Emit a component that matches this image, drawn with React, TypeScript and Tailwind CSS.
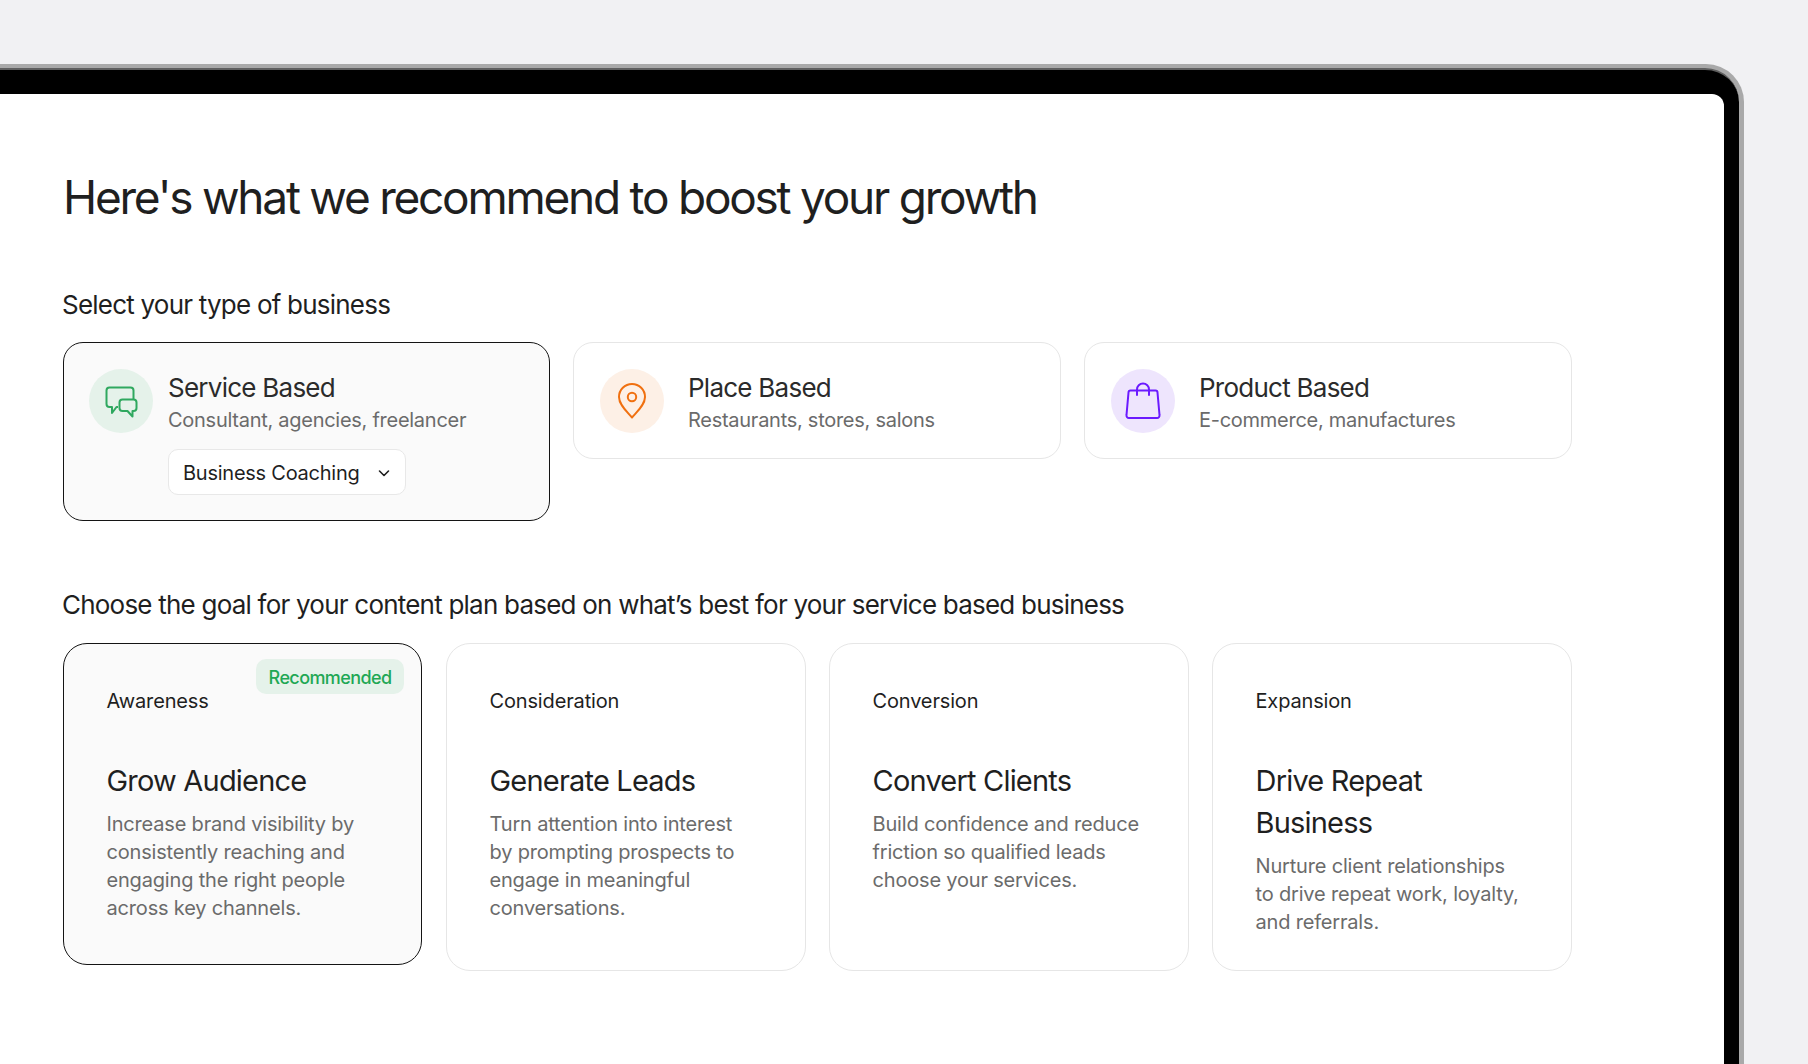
const font = "font-['Inter','Liberation_Sans',sans-serif]";

function ChatIcon() {
  return (
    <svg width="64" height="64" viewBox="0 0 64 64" fill="none" stroke="#2fa85f" strokeWidth="2" strokeLinejoin="round">
      <path d="M29 38H27.5L23 44V38H20.5a3 3 0 0 1-3-3V21.5a3 3 0 0 1 3-3H41.5a3 3 0 0 1 3 3V30" />
      <path d="M33.5 30.5H44.5a3 3 0 0 1 3 3V39a3 3 0 0 1-3 3H43.5V47.5L38.5 42H33.5a3 3 0 0 1-3-3V33.5a3 3 0 0 1 3-3Z" />
    </svg>
  );
}

function PinIcon() {
  return (
    <svg width="64" height="64" viewBox="0 0 64 64" fill="none" stroke="#f07010" strokeWidth="2" strokeLinejoin="round">
      <path d="M32 48.5C27 42.5 19 36 19 28a13 13 0 0 1 26 0C45 36 37 42.5 32 48.5Z" />
      <circle cx="32" cy="28" r="4.2" />
    </svg>
  );
}

function BagIcon() {
  return (
    <svg width="64" height="64" viewBox="0 0 64 64" fill="none" stroke="#6b1aff" strokeWidth="2" strokeLinejoin="round" strokeLinecap="round">
      <path d="M19.5 21.5H44.5a2 2 0 0 1 2 2L48.5 46a2.5 2.5 0 0 1-2.5 3H18a2.5 2.5 0 0 1-2.5-3L17.5 23.5a2 2 0 0 1 2-2Z" />
      <path d="M26 26V20.5a6 6 0 0 1 12 0V26" />
    </svg>
  );
}

function BusinessCard(props: {
  title: string;
  desc: string;
  circle: string;
  icon: React.ReactNode;
  selected?: boolean;
}) {
  return (
    <div
      className={
        props.selected
          ? "flex h-[179px] items-start gap-[15px] rounded-[20px] border-[1.5px] border-[#141414] bg-[#fafafa] pl-[25px] pt-[26px]"
          : "flex h-[117px] items-start gap-[24px] rounded-[20px] border-[1.5px] border-[#e6e6e6] bg-white pl-[26px] pt-[26px]"
      }
    >
      <div className={"flex h-16 w-16 shrink-0 items-center justify-center rounded-full " + props.circle}>
        {props.icon}
      </div>
      <div className="flex flex-col pt-[2px]">
        <div className="text-[26px] leading-[34px] tracking-[-0.75px] text-[#2b2b2b]">{props.title}</div>
        <div className="text-[20px] leading-[30px] tracking-[-0.27px] text-[#6b6b6b]">{props.desc}</div>
        {props.selected && (
          <div className="mt-[14px] flex h-[46px] w-[238px] items-center justify-between rounded-[10px] border border-[#e8e8e8] bg-white pl-[14px] pr-[13px] pt-px">
            <span className="text-[20px] tracking-[-0.25px] text-[#1f1f1f]">Business Coaching</span>
            <svg width="16" height="16" viewBox="0 0 16 16" fill="none" stroke="#1f1f1f" strokeWidth="1.6" strokeLinecap="round" strokeLinejoin="round">
              <path d="M3.5 6L8 10.5L12.5 6" />
            </svg>
          </div>
        )}
      </div>
    </div>
  );
}

function GoalCard(props: {
  stage: string;
  title: string[];
  desc: string[];
  selected?: boolean;
}) {
  return (
    <div
      className={
        props.selected
          ? "relative mr-px h-[322px] self-start rounded-[24px] border-[1.5px] border-[#141414] bg-[#fafafa] pl-[42.5px] pt-[44px]"
          : "relative rounded-[24px] border-[1.5px] border-[#e6e6e6] bg-white pl-[42.5px] pt-[44px]"
      }
    >
      {props.selected && (
        <div className="absolute right-[17px] top-[15px] flex h-[35px] w-[148px] items-center justify-center rounded-[10px] bg-[#e5f2ea] pt-[2px] text-[18px] font-medium tracking-[-0.6px] text-[#1fa855]">
          Recommended
        </div>
      )}
      <div className="text-[20px] leading-[26px] tracking-[-0.15px] text-[#1f1f1f]">{props.stage}</div>
      <div className="mt-[46px] text-[29px] leading-[42px] tracking-[-0.8px] text-[#1f1f1f]">
        {props.title.map((t) => (
          <div key={t}>{t}</div>
        ))}
      </div>
      <div className="mt-[8px] pb-[34px] text-[20px] leading-[28px] tracking-[-0.18px] text-[#6b6b6b]">
        {props.desc.map((t) => (
          <div key={t}>{t}</div>
        ))}
      </div>
    </div>
  );
}

export default function App() {
  return (
    <div className={"h-[1064px] w-[1808px] overflow-hidden bg-[#f1f1f3] pr-[64px] pt-[64px] " + font}>
      <div className="h-full rounded-tr-[38px] bg-[#a9a9a9] pr-[5px] pt-[4px]">
        <div className="h-full rounded-tr-[34px] border-t-2 border-[#5f5f5f] bg-black pr-[15px] pt-[24px]">
          <div className="h-full rounded-tr-[12px] bg-white pl-[63px] pt-[74px]">
            <h1 className="text-[46px] leading-[58px] tracking-[-2.25px] text-[#1f1f1f]">
              Here's what we recommend to boost your growth
            </h1>

            <div className="-ml-px mt-[63px] text-[26px] leading-[32px] tracking-[-0.78px] text-[#1f1f1f]">
              Select your type of business
            </div>
            <div className="mt-[21px] grid w-[1509px] grid-cols-[487px_488px_488px] items-start gap-[23px]">
              <BusinessCard
                selected
                title="Service Based"
                desc="Consultant, agencies, freelancer"
                circle="bg-[#e5f2ea]"
                icon={<ChatIcon />}
              />
              <BusinessCard
                title="Place Based"
                desc="Restaurants, stores, salons"
                circle="bg-[#fdf0e6]"
                icon={<PinIcon />}
              />
              <BusinessCard
                title="Product Based"
                desc="E-commerce, manufactures"
                circle="bg-[#eee5fd]"
                icon={<BagIcon />}
              />
            </div>

            <div className="-ml-px mt-[68px] text-[26px] leading-[32px] tracking-[-0.78px] text-[#1f1f1f]">
              Choose the goal for your content plan based on what’s best for your service based business
            </div>
            <div className="mt-[22px] grid w-[1509px] grid-cols-4 gap-[23px]">
              <GoalCard
                selected
                stage="Awareness"
                title={["Grow Audience"]}
                desc={["Increase brand visibility by", "consistently reaching and", "engaging the right people", "across key channels."]}
              />
              <GoalCard
                stage="Consideration"
                title={["Generate Leads"]}
                desc={["Turn attention into interest", "by prompting prospects to", "engage in meaningful", "conversations."]}
              />
              <GoalCard
                stage="Conversion"
                title={["Convert Clients"]}
                desc={["Build confidence and reduce", "friction so qualified leads", "choose your services."]}
              />
              <GoalCard
                stage="Expansion"
                title={["Drive Repeat", "Business"]}
                desc={["Nurture client relationships", "to drive repeat work, loyalty,", "and referrals."]}
              />
            </div>
          </div>
        </div>
      </div>
    </div>
  );
}
